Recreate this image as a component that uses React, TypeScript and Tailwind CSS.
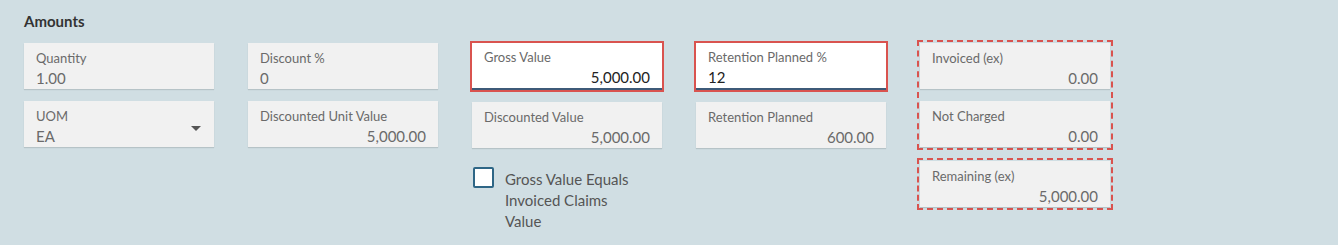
import type { ReactNode } from 'react';

const font = { fontFamily: 'Lato, "Noto Sans", sans-serif' };

function Field({
  label,
  value,
  align = 'right',
  children,
}: {
  label: string;
  value: string;
  align?: 'left' | 'right';
  children?: ReactNode;
}) {
  return (
    <div className="relative h-[46px] w-[190px] bg-[#f1f1f1] px-[12px] pt-[7px] shadow-[0_1px_1px_rgba(0,0,0,0.12)]">
      <div className="text-[13px] leading-[16px] text-[#6a6a6a]">{label}</div>
      <div
        className={`mt-[3px] text-[15px] leading-[19px] text-[#6a6a6a] ${align === 'right' ? 'text-right' : 'text-left'}`}
      >
        {value}
      </div>
      {children}
    </div>
  );
}

function EditField({ label, value, align = 'right' }: { label: string; value: string; align?: 'left' | 'right' }) {
  return (
    <div className="-m-[2px] w-[194px] border-2 border-[#d9534f]">
      <div className="h-[47px] w-[190px] border-b-2 border-[#3d5a78] bg-white px-[12px] pt-[6px]">
        <div className="text-[13px] leading-[16px] text-[#6a6a6a]">{label}</div>
        <div
          className={`mt-[3px] text-[15px] leading-[19px] text-[#222] ${align === 'right' ? 'text-right' : 'text-left'}`}
        >
          {value}
        </div>
      </div>
    </div>
  );
}

export default function App() {
  return (
    <div className="h-[245px] w-[1338px] bg-[#d0dee3] px-6 pt-[12px]" style={font}>
      <h2 className="text-[15px] font-bold leading-[18px] text-[#333]">Amounts</h2>

      <div className="mt-[13px] flex gap-[34px]">
        <div className="flex flex-col gap-[12px]">
          <Field label="Quantity" value="1.00" align="left" />
          <Field label="UOM" value="EA" align="left">
            <div className="absolute right-[13px] top-[25px] h-0 w-0 border-x-[5px] border-t-[5px] border-x-transparent border-t-[#555]" />
          </Field>
        </div>

        <div className="flex flex-col gap-[12px]">
          <Field label="Discount %" value="0" align="left" />
          <Field label="Discounted Unit Value" value="5,000.00" />
        </div>

        <div className="flex flex-col gap-[12px]">
          <EditField label="Gross Value" value="5,000.00" />
          <Field label="Discounted Value" value="5,000.00" />
          <div className="mt-[5px] flex items-start gap-[11px] pl-[1px]">
            <div className="mt-[2px] h-[21px] w-[21px] shrink-0 rounded-[2px] border-2 border-[#2e6686] bg-white" />
            <div className="mt-[4px] w-[140px] text-[15px] leading-[21px] text-[#555]">
              Gross Value Equals Invoiced Claims Value
            </div>
          </div>
        </div>

        <div className="flex flex-col gap-[12px]">
          <EditField label="Retention Planned %" value="12" align="left" />
          <Field label="Retention Planned" value="600.00" />
        </div>

        <div className="flex flex-col">
          <div className="-m-[3px] flex flex-col gap-[12px] border-2 border-dashed border-[#d9534f] p-px">
            <Field label="Invoiced (ex)" value="0.00" />
            <Field label="Not Charged" value="0.00" />
          </div>
          <div className="mx-[-3px] mt-[11px] border-2 border-dashed border-[#d9534f] p-px">
            <Field label="Remaining (ex)" value="5,000.00" />
          </div>
        </div>
      </div>
    </div>
  );
}
